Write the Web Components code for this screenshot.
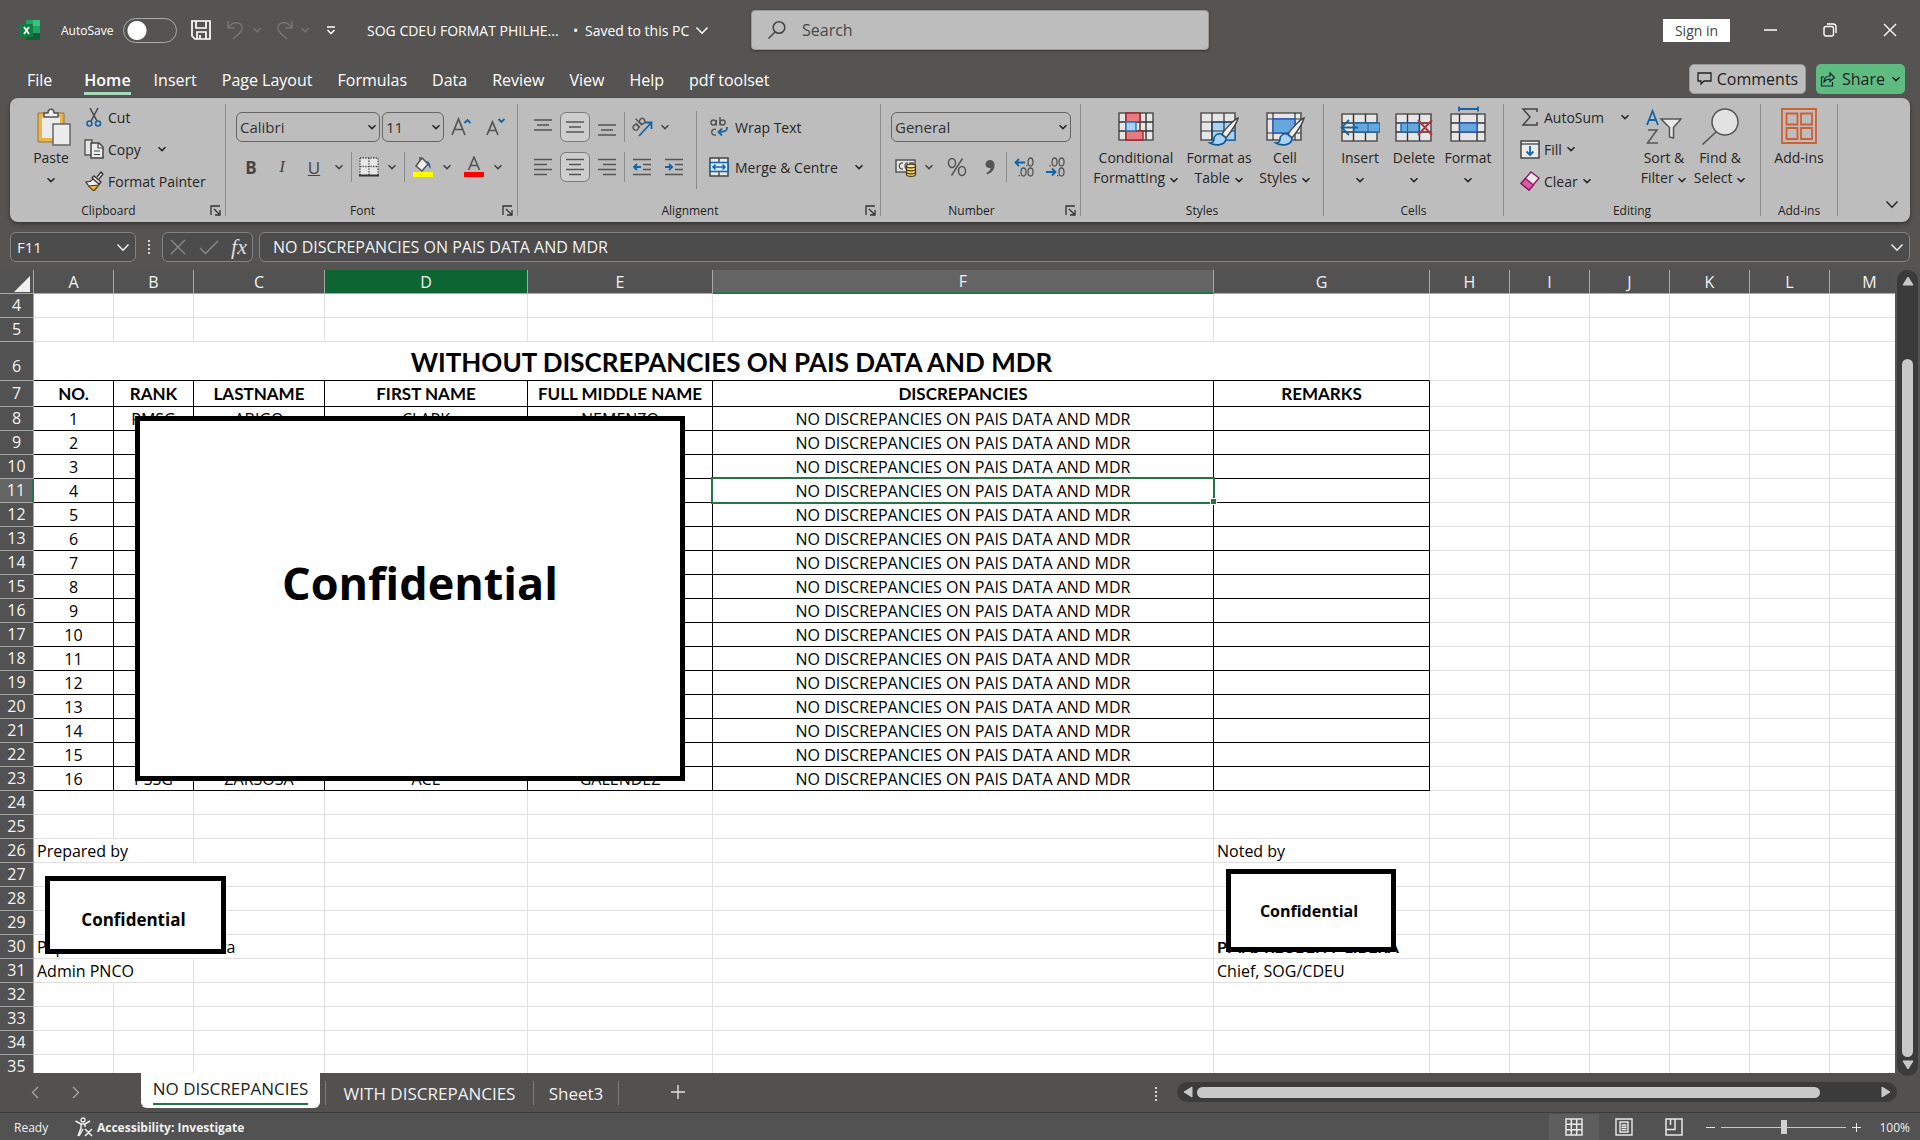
<!DOCTYPE html>
<html lang="en">
<head>
<meta charset="utf-8">
<title>SOG CDEU FORMAT PHILHE... - Excel</title>
<style>
html,body{margin:0;height:100%}
body{font-family:"Open Sans","Noto Sans",sans-serif;font-size:14px;color:#262626;overflow:hidden}
</style>
</head>
<body>
<excel-app></excel-app>
<script>
const define=(name,html,setup)=>{
  const tpl=document.createElement('template');
  tpl.innerHTML='<style>*{box-sizing:border-box}button,select,input{font:inherit;color:inherit}button{background:none;border:0;padding:0;margin:0}</style>'+html;
  customElements.define(name,class extends HTMLElement{
    constructor(){super();this.attachShadow({mode:'open'}).appendChild(tpl.content.cloneNode(true));}
    connectedCallback(){if(setup&&!this.ready){this.ready=true;setup(this,this.shadowRoot);}}
  });
};

/* ---------- icons: [width, height, content] ---------- */
const grey='stroke="#555" fill="none" stroke-width="1.5"', blue='stroke="#1464a5" fill="none" stroke-width="1.8"';
const lines=(rows,y)=>rows.map((r,i)=>`<path d="M${r[0]} ${y+i*5}H${r[1]}"/>`).join('');
const grid='<path d="M2 8h35v27H2z" fill="#e6e6e6" stroke="#555" stroke-width="1.6"/><path d="M2 17h35M2 26h35M13.500 8v27M25.500 8v27" stroke="#333" stroke-width="1.400" fill="none"/>';
const brush='<path d="M39 12c-3 1-12 10-16 16l4 4c4-5 11-15 12-20z" fill="#f2f2f2" stroke="#444" stroke-width="1.4"/><path d="M22 28c-4-1-7 2-7 5s-2 4-4 4c5 3 16 3 16-5z" fill="#a9d3f5" stroke="#125a96" stroke-width="1.6"/>';
const ICONS={
  chev:[10,6,'<path d="M1.500 1.200 5 4.600 8.500 1.200" fill="none" stroke="currentColor" stroke-width="1.500"/>'],
  chevbig:[14,9,'<path d="M1.500 1.500 7 7.200 12.500 1.500" fill="none" stroke="currentColor" stroke-width="1.500"/>'],
  excel:[20,20,'<path d="M6 0h13a1 1 0 0 1 1 1v18a1 1 0 0 1-1 1H6z" fill="#21a366"/><path d="M13 0h6a1 1 0 0 1 1 1v5h-7z" fill="#33c481"/><path d="M6 6h7v8H6z" fill="#107c41"/><path d="M13 6h7v7h-7z" fill="#21a366"/><path d="M6 13h14v6a1 1 0 0 1-1 1H6z" fill="#185c37"/><rect y="4" width="13" height="13" rx="1" fill="#107c41"/><path d="m4 7 5 7M9 7l-5 7" stroke="#fff" stroke-width="1.800"/>'],
  save:[20,20,'<path d="M1 1h18v18H4l-3-3zM5 1v7h10V1M6 19v-7h9v7M9 15v4" fill="none" stroke="#fff" stroke-width="1.700"/>'],
  undo:[20,20,'<path d="M2 1v7h7M2 8c4-7 14-7 14 0 0 5-5 7-9 11" fill="none" stroke="currentColor" stroke-width="1.500"/>'],
  redo:[20,20,'<path d="M18 1v7h-7M18 8C14 1 4 1 4 8c0 5 5 7 9 11" fill="none" stroke="currentColor" stroke-width="1.500"/>'],
  qat:[10,9,'<path d="M1 1h8M1.500 4 5 7.500 8.500 4" fill="none" stroke="#fff" stroke-width="1.400"/>'],
  search:[20,20,'<circle cx="12" cy="7.500" r="5.800" fill="none" stroke="#444" stroke-width="1.500"/><path d="M8 12 1.500 18.500" stroke="#444" stroke-width="1.500"/>'],
  min:[14,14,'<path d="M0 7h13" stroke="#fff" stroke-width="1.500"/>'],
  restore:[14,14,'<rect x="1" y="3.500" width="9.500" height="9.500" rx="2" fill="none" stroke="#fff" stroke-width="1.400"/><path d="M4 1h6a3 3 0 0 1 3 3v6" fill="none" stroke="#fff" stroke-width="1.400"/>'],
  close:[14,14,'<path d="m1 1 12 12M13 1 1 13" stroke="#fff" stroke-width="1.400"/>'],
  comment:[16,14,'<path d="M1 1h13v8H7l-3 3V9H1z" fill="none" stroke="#222" stroke-width="1.300"/>'],
  share:[16,16,'<path d="M4 6H1.500v9h11v-4" fill="none" stroke="#123" stroke-width="1.200"/><path d="M4 11c0-4 2-6 6-6V2l4.500 4.500L10 10.500V8C7 8 5.500 9 4 11z" fill="none" stroke="#123" stroke-width="1.200"/>'],
  paste:[40,40,'<path d="M7 7h26v29H7z" fill="#e9b54a" stroke="#9a762f"/><path d="M11 11h18v21H11z" fill="#ececec"/><path d="M13 11V7h4c0-5 6-5 6 0h4v4z" fill="#efefef" stroke="#555" stroke-width="1.500"/><path d="M22 18h17v21H22z" fill="#ececec" stroke="#666" stroke-width="1.500"/>'],
  cut:[20,20,'<path d="M6 1l7 13M14 1 7 14" stroke="#444" stroke-width="1.500"/><circle cx="5.500" cy="16.500" r="2.500" fill="none" stroke="#1464a5" stroke-width="1.600"/><circle cx="14" cy="16.500" r="2.500" fill="none" stroke="#1464a5" stroke-width="1.600"/>'],
  copy:[20,20,'<path d="M7 16H1V1h7v4" fill="#e6e6e6" stroke="#555" stroke-width="1.400"/><path d="M7 4h8l4 4v11H7z" fill="#ececec" stroke="#444" stroke-width="1.500"/><path d="M14 4v5h5M10 12h6M10 15.500h6" fill="none" stroke="#444" stroke-width="1.200"/>'],
  painter:[20,20,'<path d="M2 11c4 0 6-1 8-4l6 5c-1 3-4 5-6 8-3-2-6-5-8-9z" fill="#e9b54a" stroke="#5c4415" stroke-width="1.200"/><path d="m2 11c4 0 6-1 8-4l6 5-1 2-10 1z" fill="#ececec" stroke="#333"/><path d="m8 7 2-2 7 6-2 2zM13 6l4-5 2 2-4 5" fill="#ececec" stroke="#333" stroke-width="1.300"/>'],
  launch:[11,11,'<path d="M1 10V1h9" fill="none" stroke="#333" stroke-width="1.300"/><path d="m4 4 5.500 5.500M10 5v5H5" fill="none" stroke="#333" stroke-width="1.300"/>'],
  grow:[20,20,'<path d="m1 18 6.500-16L14 18M3.500 12.500h8" fill="none" stroke="#555" stroke-width="1.700"/><path d="m13.500 6 3-3 3 3" '+blue+'/>'],
  shrink:[20,20,'<path d="m2 18 5.500-13L13 18M4 13.500h7" fill="none" stroke="#555" stroke-width="1.700"/><path d="m13.500 2 3 3 3-3" '+blue+'/>'],
  borders:[20,20,'<path d="M1 1h18v17H1z" fill="#e8e8e8"/><path d="M1 1h18v17M1 1v17M10 1v17M1 9.500h18" fill="none" stroke="#444" stroke-width="1.300" stroke-dasharray="1.300 1.300"/><path d="M0 18.500h20" stroke="#333" stroke-width="2"/>'],
  fill:[22,22,'<path d="m10 2-6 8 6 5 6-7zM8 5V1" fill="#ececec" stroke="#555" stroke-width="1.500"/><path d="M14 5c3 0 5 3 4.500 8-2-2-2-4-2.500-5z" fill="#175f9c"/><path d="M1 16h20v5H1z" fill="#ff0"/>'],
  fontcol:[22,22,'<path d="m5.500 14 5.500-13 5.500 13M7.500 9.500h7" fill="none" stroke="#555" stroke-width="1.600"/><path d="M1 16h20v5H1z" fill="red"/>'],
  top:[18,18,`<g ${grey}>${lines([[0,18],[3,15],[0,18]],2)}</g>`],
  mid:[18,18,`<g ${grey}>${lines([[0,18],[3,15],[0,18]],4)}</g>`],
  bot:[18,18,`<g ${grey}>${lines([[0,18],[3,15],[0,18]],7)}</g>`],
  left:[18,18,`<g ${grey}>${lines([[0,18],[0,13],[0,18],[0,13]],1.5)}</g>`],
  centre:[18,18,`<g ${grey}>${lines([[0,18],[3,15],[0,18],[3,15]],1.5)}</g>`],
  right:[18,18,`<g ${grey}>${lines([[0,18],[5,18],[0,18],[5,18]],1.5)}</g>`],
  outdent:[18,18,`<g ${grey}>${lines([[0,18],[10,18],[10,18],[0,18]],1.5)}</g><path d="M8 9H1M4 6 1 9l3 3" ${blue}/>`],
  indent:[18,18,`<g ${grey}>${lines([[0,18],[10,18],[10,18],[0,18]],1.5)}</g><path d="M0 9h7M4 6l3 3-3 3" ${blue}/>`],
  orient:[22,22,'<g transform="rotate(-45 8 9)" fill="none" stroke="#555" stroke-width="1.400"><circle cx="4" cy="8.500" r="2.700"/><path d="M7 5.500v6"/><path d="M10 2v9.500"/><circle cx="13" cy="8.500" r="2.700"/></g><path d="M8 20 20 7M14 6.500h6.500V13" '+blue+'/>'],
  wrap:[20,20,'<g fill="none" stroke="#555" stroke-width="1.400"><circle cx="4.500" cy="5.500" r="2.500"/><path d="M7.300 3v5.500M11 0v8.500"/><circle cx="13.600" cy="5.500" r="2.500"/><path d="M7 12.500c-5-2-6 6-1 5.500h1"/></g><path d="M18 10v1c0 3-2 4-8 4M13 11.500 9.500 15l3.500 3.500" '+blue+'/>'],
  merge:[20,20,'<path d="M1 1h18v18H1z" fill="#e8e8e8" stroke="#444" stroke-width="1.500"/><path d="M10 1v18" stroke="#444" stroke-width="1.400"/><path d="M1 5.500h18v9H1z" fill="#d7e9f8" stroke="#1464a5" stroke-width="1.600"/><path d="M4 10h12M6.500 7.500 4 10l2.500 2.500M13.500 7.500 16 10l-2.500 2.500" fill="none" stroke="#1464a5" stroke-width="1.500"/>'],
  acct:[22,20,'<path d="M1 3h19v12H1z" fill="#e6e6e6" stroke="#555" stroke-width="1.500"/><path d="M8 6c-5-1-5 7 0 6M13 6c-4-1-4 7 0 6M15 9V6h3v3" fill="none" stroke="#555" stroke-width="1.300"/><path d="M11.500 9v8.500c0 2.500 9 2.500 9 0V9z" fill="#f3d27a" stroke="#4d3a10" stroke-width="1.200"/><ellipse cx="16" cy="9" rx="4.500" ry="1.800" fill="#fbe7ae" stroke="#4d3a10" stroke-width="1.200"/><path d="M11.500 12c0 2.400 9 2.400 9 0M11.500 15c0 2.400 9 2.400 9 0" fill="none" stroke="#4d3a10" stroke-width="1.200"/>'],
  percent:[20,20,'<g fill="none" stroke="#555" stroke-width="1.500"><ellipse cx="5" cy="6" rx="3.500" ry="4.500"/><ellipse cx="15" cy="14" rx="3.500" ry="4.500"/><path d="M15.500 1.500 4.500 18.500"/></g>'],
  comma:[10,18,'<path d="M5 2c3 0 4.500 2 4.500 5 0 5-3 8-7.500 9.500L1.500 15C4 13.500 5.500 12 5.500 10 3 10.500.500 9 .500 6.300.500 4 2.500 2 5 2z" fill="#555"/>'],
  incdec:[20,20,'<path d="M11 5.500H1.500M5 2 1.500 5.500 5 9" '+blue+'/><g fill="none" stroke="#555" stroke-width="1.300"><ellipse cx="16.500" cy="5" rx="2.500" ry="4"/><ellipse cx="9.500" cy="15" rx="2.500" ry="4"/><ellipse cx="16.500" cy="15" rx="2.500" ry="4"/></g><path d="M12 8h1.300v1.300H12zM4.500 18h1.300v1.300H4.500z" fill="#555"/>'],
  decdec:[20,20,'<path d="M1 15h9.500M7 11.500l3.500 3.500L7 18.500" '+blue+'/><g fill="none" stroke="#555" stroke-width="1.300"><ellipse cx="9.500" cy="5" rx="2.500" ry="4"/><ellipse cx="16.500" cy="5" rx="2.500" ry="4"/><ellipse cx="16.500" cy="15" rx="2.500" ry="4"/></g><path d="M4.500 8h1.300v1.300H4.500zM12 18h1.300v1.300H12z" fill="#555"/>'],
  condfmt:[38,40,'<path d="M2 7h34v27H2z" fill="#e6e6e6" stroke="#555" stroke-width="1.600"/><path d="M2 16h34M2 25h34M9 7v27M29 7v27M18 16v9M23 7v27" stroke="#333" stroke-width="1.400"/><path d="M9 7h14v9H9zM9 25h17v9H9z" fill="#e87b7f" stroke="#a3262c" stroke-width="1.400"/><path d="M9 16h10v9H9z" fill="#a9d3f5" stroke="#2e75b6" stroke-width="1.400"/>'],
  fmttable:[40,40,'<path d="M2 7h34v27H2z" fill="#e6e6e6" stroke="#555" stroke-width="1.600"/><path d="M13 16h23v18H13z" fill="#a9d3f5" stroke="#1d69ad" stroke-width="1.600"/><path d="M2 16h34M2 25h34M13 7v27M25 7v27" stroke="#333" stroke-width="1.200"/>'+brush],
  cellstyle:[40,40,'<path d="M2 7h34v27H2z" fill="#e6e6e6" stroke="#555" stroke-width="1.600"/><path d="M2 13h34M2 27h34M8 7v27M30 7v27" stroke="#333" stroke-width="1.200"/><path d="M8 13h22v14H8z" fill="#66a8dc" stroke="#2b57c4" stroke-width="1.400"/>'+brush],
  insert:[40,40,grid+'<path d="M14 17h26v9H14z" fill="#66a8dc" stroke="#1d69ad" stroke-width="1.400"/><path d="M28 17v9" stroke="#1d69ad"/><path d="M18 21.500H1.500M9 14l-7.500 7.500L9 29" '+blue+'/>'],
  del:[40,40,grid+'<path d="M7 17h18v9H7z" fill="#66a8dc" stroke="#1d69ad" stroke-width="1.400"/><path d="M13.500 17v9" stroke="#1d69ad"/><path d="m24 14 14 15M38 14 24 29" stroke="#b5373c" stroke-width="2" fill="none"/>'],
  format:[38,40,'<path d="M10 3h19M10 .500v5M29 .500v5" '+blue+'/><path d="M2 8h34v27H2z" fill="#e6e6e6" stroke="#555" stroke-width="1.600"/><path d="M2 17h34M2 26h34M10.500 8v27M28 8v27" stroke="#333" stroke-width="1.400"/><path d="M10.500 17H28v9H10.500z" fill="#66a8dc" stroke="#2b57c4" stroke-width="1.400"/>'],
  sigma:[20,20,'<path d="M17 5V2H3l7 8-7 8h14v-3" fill="none" stroke="#444" stroke-width="1.500"/>'],
  filldown:[20,20,'<path d="M1 2h18v17H1z" fill="#ececec" stroke="#444" stroke-width="1.500"/><path d="M1 5h18" stroke="#444" stroke-width="1.300"/><path d="M10 7v9M6.500 12.500 10 16l3.500-3.500" '+blue+'/>'],
  clear:[20,20,'<path d="M11 1 19 7 9 19 1 12.500z" fill="#f2e8ef" stroke="#8a1c63" stroke-width="1.400"/><path d="M5.500 7.500 13.500 14 9 19 1 12.500z" fill="#dd5aa8" stroke="#8a1c63" stroke-width="1.400"/>'],
  sort:[36,40,'<path d="m1 19 5.500-14L12 19M3 14h7" '+blue+'/><path d="M2 24h9L1.500 37H12" '+grey+'/><path d="M15 13h20l-7.500 8.500V32l-4 -1v-9.500z" fill="#e8e8e8" stroke="#555" stroke-width="1.500"/>'],
  find:[38,40,'<circle cx="24" cy="16" r="13" fill="#e2e2e2" stroke="#555" stroke-width="1.500"/><path d="M15 26 1.500 38.500" stroke="#555" stroke-width="1.700"/>'],
  addins:[38,40,'<g fill="none" stroke="#cf5f35" stroke-width="1.800"><path d="M2 3h34v34H2zM6.500 7.500h11v11h-11zM21 7.500h11v11H21zM6.500 22h11v11h-11zM21 22h11v11H21z"/></g>'],
  x:[16,16,'<path d="m1 1 14 14M15 1 1 15" stroke="#8c8c8c" stroke-width="1.300"/>'],
  tick:[20,16,'<path d="m1 9 5.500 5.500L19 2" fill="none" stroke="#8c8c8c" stroke-width="1.300"/>'],
  dots:[4,14,'<path d="M1 0h2v2H1zM1 4h2v2H1zM1 8h2v2H1zM1 12h2v2H1z" fill="#d4d4d4"/>'],
  prev:[8,13,'<path d="M7 1 1.500 6.500 7 12" fill="none" stroke="#a5a5a5" stroke-width="1.300"/>'],
  next:[8,13,'<path d="m1 1 5.500 5.500L1 12" fill="none" stroke="#a5a5a5" stroke-width="1.300"/>'],
  plus:[14,14,'<path d="M7 0v14M0 7h14" stroke="#e0e0e0" stroke-width="1.400"/>'],
  plussm:[9,9,'<path d="M4.500 0v9M0 4.500h9" stroke="#e8e8e8"/>'],
  minussm:[9,9,'<path d="M0 4.500h9" stroke="#e8e8e8"/>'],
  up:[12,10,'<path d="M6 1 11 9H1z" fill="#c8c8c8" stroke="#c8c8c8" stroke-linejoin="round"/>'],
  down:[12,10,'<path d="M6 9 1 1h10z" fill="#c8c8c8" stroke="#c8c8c8" stroke-linejoin="round"/>'],
  lt:[10,12,'<path d="M1 6 9 1v10z" fill="#c8c8c8" stroke="#c8c8c8" stroke-linejoin="round"/>'],
  rt:[10,12,'<path d="M9 6 1 11V1z" fill="#c8c8c8" stroke="#c8c8c8" stroke-linejoin="round"/>'],
  corner:[16,16,'<path d="M16 0v16H0z" fill="#f0f0f0"/>'],
  access:[20,20,'<circle cx="9" cy="3" r="2" fill="none" stroke="#eee" stroke-width="1.300"/><path d="M1.500 4 7 7v4l-3 8M16 4l-5 3v3M7 7h4M9 12l-4 7M11 12l7 7M18 12l-7 7" fill="none" stroke="#eee" stroke-width="1.500"/>'],
  vnormal:[18,18,'<path d="M1 1h16v16H1zM6.300 1v16M11.700 1v16M1 6.300h16M1 11.700h16" fill="none" stroke="#e8e8e8" stroke-width="1.500"/>'],
  vpage:[18,18,'<path d="M1 1h16v16H1zM5 4h8v10H5zM6.500 7h5M6.500 9.200h5M6.500 11.500h5" fill="none" stroke="#e8e8e8" stroke-width="1.400"/>'],
  vbreak:[18,18,'<path d="M1 1h16v16H1zM1 11.500h9V1M5.500 1v6" fill="none" stroke="#e8e8e8" stroke-width="1.500"/>']
};
define('x-icon','<style>:host{display:inline-flex;flex:none}svg{display:block}</style><span id="s" style="display:flex"></span>',(el,root)=>{
  const [w,h,c]=ICONS[el.getAttribute('name')];
  root.getElementById('s').innerHTML=`<svg width="${w}" height="${h}" viewBox="0 0 ${w} ${h}" aria-hidden="true">${c}</svg>`;
});

/* ---------- ribbon parts ---------- */
define('rb-group',`<style>
:host{display:flex;flex-direction:column;height:112px;flex:none;border-right:1px solid #8a8a8a;position:relative}
.body{height:98px;flex:none;display:flex}
.label{line-height:16px;padding-top:1px;font-size:12px;text-align:center;color:#222}
.launch{position:absolute;right:4px;bottom:0;display:none}
:host([launch]) .launch{display:flex}
:host([launch]) .label{padding-right:18px}
</style><div class="body"><slot></slot></div><div class="label" id="l"></div><button class="launch" aria-label="More options"><x-icon name="launch"></x-icon></button>`,
(el,r)=>{r.getElementById('l').textContent=el.getAttribute('label');});

define('rb-big',`<style>
:host{display:block;flex:none}
button{width:100%;display:flex;flex-direction:column;align-items:center;padding-top:2px}
#i{display:flex;margin-bottom:2px}
.t{line-height:20px;text-align:center;white-space:nowrap}
</style><button><span id="i"></span><span class="t"><slot></slot></span></button>`,
(el,r)=>{r.getElementById('i').innerHTML=`<x-icon name="${el.getAttribute('icon')}"></x-icon>`;});

define('rb-small',`<style>
:host{display:block}
button{height:26px;display:flex;align-items:center;gap:4px;white-space:nowrap}
:host([tall]) button{height:30px;gap:6px}
</style><button><span id="i" style="display:flex"></span><slot></slot></button>`,
(el,r)=>{r.getElementById('i').innerHTML=`<x-icon name="${el.getAttribute('icon')}"></x-icon>`;});

define('rb-tool',`<style>
:host{display:block;flex:none;width:30px}
button{width:100%;height:30px;display:flex;align-items:center;justify-content:center;font-size:17px;color:#444}
:host([on]) button{background:#cdcdcd;border:1px solid #7b7b7b;border-radius:6px}
</style><button><slot></slot></button>`,
(el,r)=>{r.querySelector('button').setAttribute('aria-label',el.getAttribute('label')||'Tool');});

define('rb-select',`<style>
:host{display:grid;flex:none;height:30px}
select{grid-area:1/1;appearance:none;width:100%;height:30px;background:transparent;border:1px solid #666;border-radius:6px;padding:0 3px;font-size:15px;color:#333}
x-icon{grid-area:1/1;justify-self:end;align-self:center;margin-right:3px;pointer-events:none}
</style><select><option></option></select><x-icon name="chev"></x-icon>`,
(el,r)=>{r.querySelector('option').textContent=el.getAttribute('value');r.querySelector('select').setAttribute('aria-label',el.getAttribute('label'));});

define('excel-ribbon',`<style>
:host{display:flex;margin:0 10px;height:124px;padding-top:6px;background:#bdbdbd;border-radius:8px;box-shadow:0 2px 4px #0006;flex:none}
.rows{display:flex;flex-direction:column;padding-top:8px;gap:10px}
.row{display:flex;height:30px;align-items:center}
.small{display:flex;flex-direction:column;gap:6px}
.sep{width:1px;height:30px;background:#8a8a8a;margin:0 3px;flex:none}
.vsep{width:1px;height:78px;margin-top:7px;background:#8a8a8a}
.g2{gap:2px}
.end{flex:1;display:flex;justify-content:flex-end;align-items:flex-end;padding:0 11px 13px}
.end button{display:flex}
b,i,u{font-size:17px}
</style>
<rb-group label="Clipboard" launch style="width:216px">
 <rb-big icon="paste" style="width:60px;margin-left:11px">Paste<br><x-icon name="chev"></x-icon></rb-big>
 <div class="small" style="padding-left:3px">
  <rb-small icon="cut">Cut</rb-small>
  <rb-small icon="copy">Copy<x-icon name="chev" style="margin-left:12px"></x-icon></rb-small>
  <rb-small icon="painter">Format Painter</rb-small>
 </div>
</rb-group>
<rb-group label="Font" launch style="width:292px">
 <div class="rows" style="padding-left:10px">
  <div class="row g2"><rb-select label="Font" value="Calibri" style="width:144px"></rb-select><rb-select label="Font size" value="11" style="width:62px"></rb-select>
   <rb-tool label="Increase font size"><x-icon name="grow"></x-icon></rb-tool><rb-tool label="Decrease font size" style="width:34px"><x-icon name="shrink"></x-icon></rb-tool></div>
  <div class="row"><rb-tool label="Bold"><b>B</b></rb-tool><rb-tool label="Italic" style="width:32px"><i style="font-family:'Liberation Serif',serif">I</i></rb-tool><rb-tool label="Underline" style="width:32px"><u>U</u></rb-tool>
   <rb-tool style="width:18px" label="Underline styles"><x-icon name="chev"></x-icon></rb-tool><span class="sep"></span>
   <rb-tool style="width:28px" label="Borders"><x-icon name="borders"></x-icon></rb-tool><rb-tool style="width:18px" label="Border styles"><x-icon name="chev"></x-icon></rb-tool><span class="sep"></span>
   <rb-tool style="width:30px" label="Fill colour"><x-icon name="fill"></x-icon></rb-tool><rb-tool style="width:18px" label="Fill colours"><x-icon name="chev"></x-icon></rb-tool>
   <rb-tool style="width:36px" label="Font colour"><x-icon name="fontcol"></x-icon></rb-tool><rb-tool style="width:12px" label="Font colours"><x-icon name="chev"></x-icon></rb-tool></div>
 </div>
</rb-group>
<rb-group label="Alignment" launch style="width:363px">
 <div class="rows" style="padding-left:10px">
  <div class="row g2"><rb-tool label="Top align"><x-icon name="top"></x-icon></rb-tool><rb-tool on label="Middle align"><x-icon name="mid"></x-icon></rb-tool><rb-tool label="Bottom align"><x-icon name="bot"></x-icon></rb-tool><span class="sep" style="margin:0"></span>
   <rb-tool label="Orientation"><x-icon name="orient"></x-icon></rb-tool><rb-tool style="width:12px" label="Orientations"><x-icon name="chev"></x-icon></rb-tool></div>
  <div class="row g2"><rb-tool label="Align left"><x-icon name="left"></x-icon></rb-tool><rb-tool on label="Centre"><x-icon name="centre"></x-icon></rb-tool><rb-tool label="Align right"><x-icon name="right"></x-icon></rb-tool><span class="sep" style="margin:0"></span>
   <rb-tool label="Decrease indent"><x-icon name="outdent"></x-icon></rb-tool><rb-tool label="Increase indent"><x-icon name="indent"></x-icon></rb-tool></div>
 </div>
 <div class="vsep" style="margin-left:7px"></div>
 <div class="rows" style="padding-left:12px">
  <rb-small tall icon="wrap">Wrap Text</rb-small>
  <rb-small tall icon="merge">Merge &amp; Centre<x-icon name="chev" style="margin-left:10px"></x-icon></rb-small>
 </div>
</rb-group>
<rb-group label="Number" launch style="width:200px">
 <div class="rows" style="padding-left:10px">
  <rb-select label="Number format" value="General" style="width:180px"></rb-select>
  <div class="row"><rb-tool label="Accounting format"><x-icon name="acct"></x-icon></rb-tool><rb-tool style="width:16px" label="Accounting formats"><x-icon name="chev"></x-icon></rb-tool>
   <rb-tool style="width:40px" label="Percent"><x-icon name="percent"></x-icon></rb-tool><rb-tool style="width:26px" label="Comma"><x-icon name="comma"></x-icon></rb-tool><span class="sep"></span>
   <rb-tool style="width:28px" label="Increase decimal"><x-icon name="incdec"></x-icon></rb-tool><rb-tool style="width:34px" label="Decrease decimal"><x-icon name="decdec"></x-icon></rb-tool></div>
 </div>
</rb-group>
<rb-group label="Styles" style="width:243px">
 <rb-big icon="condfmt" style="width:90px;margin-left:10px">Conditional<br>Formatting <x-icon name="chev"></x-icon></rb-big>
 <rb-big icon="fmttable" style="width:76px">Format as<br>Table <x-icon name="chev"></x-icon></rb-big>
 <rb-big icon="cellstyle" style="width:56px">Cell<br>Styles <x-icon name="chev"></x-icon></rb-big>
</rb-group>
<rb-group label="Cells" style="width:180px">
 <rb-big icon="insert" style="width:52px;margin-left:10px">Insert<br><x-icon name="chev"></x-icon></rb-big>
 <rb-big icon="del" style="width:56px">Delete<br><x-icon name="chev"></x-icon></rb-big>
 <rb-big icon="format" style="width:52px">Format<br><x-icon name="chev"></x-icon></rb-big>
</rb-group>
<rb-group label="Editing" style="width:257px">
 <div class="small" style="width:132px;padding-left:16px">
  <rb-small icon="sigma">AutoSum<x-icon name="chev" style="margin-left:12px"></x-icon></rb-small>
  <rb-small icon="filldown">Fill<x-icon name="chev"></x-icon></rb-small>
  <rb-small icon="clear">Clear<x-icon name="chev"></x-icon></rb-small>
 </div>
 <rb-big icon="sort" style="width:56px">Sort &amp;<br>Filter <x-icon name="chev"></x-icon></rb-big>
 <rb-big icon="find" style="width:56px">Find &amp;<br>Select <x-icon name="chev"></x-icon></rb-big>
</rb-group>
<rb-group label="Add-ins" style="width:77px">
 <rb-big icon="addins" style="width:76px">Add-ins</rb-big>
</rb-group>
<div class="end"><button aria-label="Collapse ribbon"><x-icon name="chevbig"></x-icon></button></div>`);

/* ---------- title bar and tabs ---------- */
define('title-bar',`<style>
:host{display:flex;height:60px;align-items:center;color:#fff;padding-left:20px;position:relative;flex:none}
button{display:flex;align-items:center}
.auto{font-size:12px;margin-left:21px;width:62px}
.toggle{appearance:none;margin:0;width:54px;height:25px;border:1px solid #aaa;border-radius:13px;background:radial-gradient(circle at 13px 50%,#fff 9px,transparent 10px)}
.dim{color:#757373}
.search{position:absolute;left:751px;top:10px;width:458px;height:40px;display:flex;align-items:center;background:#bdbdbd;border:1px solid #999;border-radius:4px;box-shadow:0 1px 3px #0005;padding-left:15px}
.search input{flex:1;border:0;background:none;outline:0;padding:0;margin-left:15px;font-size:16px;color:#444}
.search input::placeholder{color:#484848;opacity:1}
.sign{background:#fff;color:#444;width:67px;height:23px;font-size:14px;justify-content:center}
.right{margin-left:auto;display:flex;align-items:center}
</style>
<x-icon name="excel"></x-icon><label class="auto" for="as">AutoSave</label><input id="as" class="toggle" type="checkbox">
<button aria-label="Save" style="margin-left:14px"><x-icon name="save"></x-icon></button>
<button aria-label="Undo" class="dim" style="margin-left:15px;gap:6px"><x-icon name="undo"></x-icon><x-icon name="chev"></x-icon></button>
<button aria-label="Redo" class="dim" style="margin-left:12px;gap:6px"><x-icon name="redo"></x-icon><x-icon name="chev"></x-icon></button>
<button aria-label="Customise toolbar" style="margin-left:16px"><x-icon name="qat"></x-icon></button>
<span style="margin-left:31px;width:206px;white-space:nowrap">SOG CDEU FORMAT PHILHE...</span><span style="width:12px">•</span>
<button style="gap:6px;white-space:nowrap">Saved to this PC<x-icon name="chevbig"></x-icon></button>
<label class="search"><x-icon name="search"></x-icon><input placeholder="Search" aria-label="Search"></label>
<div class="right"><button class="sign">Sign in</button>
<button aria-label="Minimise" style="margin-left:34px"><x-icon name="min"></x-icon></button>
<button aria-label="Restore" style="margin-left:45px"><x-icon name="restore"></x-icon></button>
<button aria-label="Close" style="margin:0 23px 0 46px"><x-icon name="close"></x-icon></button></div>`);

define('ribbon-tabs',`<style>
:host{display:flex;height:38px;color:#fff;padding:0 15px 0 27px;align-items:flex-start;flex:none}
nav{display:flex;gap:25px;font-size:16px;line-height:24px;padding-top:8px}
nav :first-child{margin-right:7px}
a{color:inherit;text-decoration:none;white-space:nowrap}
a.on{font-weight:600;border-bottom:3px solid #a4d9b9;margin-right:-2px}
.right{margin-left:auto;display:flex;gap:10px;padding-top:4px}
button{height:30px;border-radius:5px;font-size:16px;color:#222;display:flex;align-items:center;justify-content:center;gap:6px}
</style><nav><a href="#file">File</a><a href="#home" class="on">Home</a><a href="#insert">Insert</a><a href="#layout">Page Layout</a><a href="#formulas">Formulas</a><a href="#data">Data</a><a href="#review">Review</a><a href="#view">View</a><a href="#help">Help</a><a href="#pdf">pdf toolset</a></nav>
<div class="right"><button style="width:117px;background:#bdbdbd;border:1px solid #999;gap:4px"><x-icon name="comment"></x-icon>Comments</button>
<button style="width:89px;background:#5fbc80"><x-icon name="share"></x-icon>Share<x-icon name="chev"></x-icon></button></div>`);

/* ---------- formula bar ---------- */
define('formula-bar',`<style>
:host{display:flex;height:48px;padding:10px 10px 8px;color:#f2f2f2;flex:none}
.box{height:30px;border:1px solid #828282;border-radius:6px;background:#4c4c4c;display:flex;align-items:center}
input{border:0;background:none;outline:0;padding:0;min-width:0;flex:1}
</style>
<div class="box" style="width:126px;padding:0 5px 0 6px"><input value="F11" aria-label="Name box" style="font-size:15px"><x-icon name="chevbig"></x-icon></div>
<x-icon name="dots" style="margin:8px 11px 0"></x-icon>
<div class="box" style="width:91px;padding:0 5px 0 7px;justify-content:space-between;color:#ddd"><x-icon name="x"></x-icon><x-icon name="tick"></x-icon><button aria-label="Insert function" style="font:italic 22px 'Liberation Serif',serif">fx</button></div>
<div class="box" style="flex:1;margin-left:6px;padding:0 5px 0 13px"><input value="NO DISCREPANCIES ON PAIS DATA AND MDR" aria-label="Formula" style="font-size:16px"><x-icon name="chevbig"></x-icon></div>`);

/* ---------- sheet ---------- */
define('cover-box',`<style>:host{position:absolute;display:flex;align-items:center;justify-content:center;background:#fff;border:5px solid #000;box-sizing:border-box;color:#000;font-weight:700}</style><span><slot></slot></span>`);

define('sheet-grid',`<style>
:host{display:block;position:relative;flex:1;min-width:0;overflow:hidden;background:#fff;color:#000}
table{border-collapse:separate;border-spacing:0;table-layout:fixed;width:1909px;font-size:16px}
th,td{padding:0;height:24px;line-height:23px;border-right:1px solid #e0e0e0;border-bottom:1px solid #e0e0e0;white-space:nowrap;text-align:center;overflow:hidden;font-weight:400}
thead th,tbody th{background:#525252;color:#f2f2f2;border-color:#a8a8a8}
thead th{line-height:22px;padding-top:1px}
thead th.sel{background:#0e6534}
thead th.act{background:#646464;border-bottom:2px solid #257548;line-height:21px}
tbody th.act{background:#646464;border-right:2px solid #257548}
td{padding-top:1px;line-height:22px}
td.k{border-color:#000}
td.kb{border-bottom-color:#000}
td.h,td.title,td b{font-family:Lato,Carlito,sans-serif;font-weight:700}
td.h{font-size:17px}
td.title{font-size:26px;line-height:34px;padding-top:2px}
td.txt{text-align:left;padding-left:3px;overflow:visible}
td.nr{border-right-color:transparent}
td.cur{position:relative;overflow:visible}
.frame{position:absolute;inset:-2px;border:2px solid #257548}
.frame::after{content:"";position:absolute;right:-4px;bottom:-3px;width:5px;height:5px;background:#257548;border:1px solid #fff}
</style><table><colgroup id="c"></colgroup><thead><tr id="h"></tr></thead><tbody id="b"></tbody></table>
<cover-box style="left:135px;top:146px;width:550px;height:365px;font-size:45px;padding:0 0 32px 20px">Confidential</cover-box>
<cover-box style="left:45px;top:606px;width:181px;height:78px;font-size:17px;padding:8px 4px 0 0">Confidential</cover-box>
<cover-box style="left:1226px;top:599px;width:170px;height:83px;font-size:16px;padding:0 4px 0 0">Confidential</cover-box>`,
(el,r)=>{
  const $=i=>r.getElementById(i), cols='ABCDEFGHIJKLM'.split('');
  $('c').innerHTML=[34,80,80,131,203,185,501,216,80,80,80,80,80,80].map(w=>`<col style="width:${w}px">`).join('');
  $('h').innerHTML='<th style="text-align:right;padding:5px 3px 0 0;line-height:0"><x-icon name="corner"></x-icon></th>'+cols.map(c=>`<th scope="col" class="${c=='D'?'sel':c=='F'?'act':''}">${c}</th>`).join('');
  const first=['PMSG','ABIGO','CLARK','NEMENZO'], last=['PSSG','ZARSOSA','ACE','GALENDEZ'];
  let out='';
  for(let n=4;n<=35;n++){
    const hgt=n==6?39:n==7?26:24;
    out+=`<tr><th scope="row" class="${n==11?'act':''}" style="height:${hgt}px${n==6?';padding-top:10px':''}">${n}</th>`;
    let i=0;
    if(n==6){out+='<td colspan="7" class="title kb">WITHOUT DISCREPANCIES ON PAIS DATA AND MDR</td>';i=7;}
    for(;i<13;i++){
      let cls='',t='';
      if(n>=7&&n<=23&&i<7){
        cls='k';
        if(n==7){cls+=' h';t=['NO.','RANK','LASTNAME','FIRST NAME','FULL MIDDLE NAME','DISCREPANCIES','REMARKS'][i];}
        else if(i==0)t=n-7;
        else if(i==5)t='NO DISCREPANCIES ON PAIS DATA AND MDR';
        else if(i<5&&n==8)t=first[i-1];
        else if(i<5&&n==23)t=last[i-1];
        else if(i==1&&(n==10||n==11||n==18))t='PSSG';
        if(n==11&&i==5){cls+=' cur';t+='<span class="frame"></span>';}
      }
      const put=(r,c,s)=>{if(n==r&&i==c){cls='txt'+(c==0?' nr':'');t=s;}};
      put(26,0,'Prepared by');put(30,0,'Pepe Rommel D. Alcantara');put(31,0,'Admin PNCO');
      put(26,6,'Noted by');put(30,6,'<b>PMAJ REUBEN P LIBERA</b>');put(31,6,'Chief, SOG/CDEU');
      if((n==30&&i==1)||(n>=27&&n<=29&&i<2))cls='nr';
      out+=`<td class="${cls}">${t}</td>`;
    }
    out+='</tr>';
  }
  $('b').innerHTML=out;
});

define('scroll-v',`<style>:host{display:flex;flex-direction:column;align-items:center;width:21px;margin:0 2px -3px 2px;background:#3b3b3b;border-radius:10px;padding:6px 0;gap:3px;flex:none;z-index:1}
.track{flex:1;display:flex;flex-direction:column;padding-top:70px}.thumb{flex:1;width:11px;border-radius:6px;background:#c8c8c8}button{display:flex}</style>
<button aria-label="Scroll up"><x-icon name="up"></x-icon></button><div class="track"><div class="thumb"></div></div><button aria-label="Scroll down"><x-icon name="down"></x-icon></button>`);

define('sheet-tabs',`<style>
:host{display:flex;height:40px;background:#525150;color:#f0f0f0;font-size:17px;border-bottom:1px solid #3c3c3c;padding:0 23px 0 31px;flex:none;position:relative}
.nav{display:flex;align-items:center;gap:33px;width:110px}
button{white-space:nowrap}
.on{background:#fff;color:#222;height:35px;width:179px;border-radius:0 0 6px 6px;display:flex;justify-content:center;font-weight:400}
.on span{border-bottom:2px solid #257548;height:32px;line-height:32px}
.tab{border-right:1px solid #7d7d7d;height:24px;margin-top:8px;display:flex;align-items:center;justify-content:center}
.h{margin:9px 0 10px 19px;flex:0 1 720px;background:#3b3b3b;border-radius:10px;display:flex;align-items:center;padding:0 6px;gap:4px}
.h div{flex:1;padding-right:57px}.h i{display:block;height:11px;border-radius:6px;background:#c8c8c8}
.h button{display:flex}
</style>
<div class="nav"><button aria-label="Previous"><x-icon name="prev"></x-icon></button><button aria-label="Next"><x-icon name="next"></x-icon></button></div>
<button class="on"><span>NO DISCREPANCIES</span></button><div class="tab" style="width:6px"></div>
<button class="tab" style="width:208px">WITH DISCREPANCIES</button><button class="tab" style="width:85px">Sheet3</button>
<button aria-label="New sheet" style="margin-left:52px"><x-icon name="plus"></x-icon></button>
<x-icon name="dots" style="margin:14px 0 0 auto"></x-icon>
<div class="h"><button aria-label="Scroll left"><x-icon name="lt"></x-icon></button><div><i></i></div><button aria-label="Scroll right"><x-icon name="rt"></x-icon></button></div>`);

define('status-bar',`<style>
:host{display:flex;height:27px;background:#525252;color:#f0f0f0;font-size:12px;align-items:center;padding:1px 10px 0 14px;flex:none}
.v{width:50px;height:26px;display:flex;align-items:center;justify-content:center}
.z{appearance:none;margin:0 6px;width:125px;height:14px;background:linear-gradient(#c8c8c8,#c8c8c8) center/100% 1px no-repeat}
.z::-webkit-slider-thumb{appearance:none;width:6px;height:14px;background:#d0d0d0}
</style>
<span style="width:60px">Ready</span><button style="display:flex;align-items:center;gap:3px;font-weight:700"><x-icon name="access"></x-icon>Accessibility: Investigate</button>
<button class="v" aria-label="Normal view" style="margin-left:auto;background:#5e5e5e"><x-icon name="vnormal"></x-icon></button><button class="v" aria-label="Page layout view"><x-icon name="vpage"></x-icon></button><button class="v" aria-label="Page break view"><x-icon name="vbreak"></x-icon></button>
<button aria-label="Zoom out" style="margin-left:7px"><x-icon name="minussm"></x-icon></button><input class="z" type="range" aria-label="Zoom" min="0" max="100" value="50"><button aria-label="Zoom in"><x-icon name="plussm"></x-icon></button>
<span style="width:49px;text-align:right">100%</span>`);

define('excel-app',`<style>
:host{display:flex;flex-direction:column;height:100vh;background:#565453;overflow:hidden}
.mid{flex:1;display:flex;min-height:0}
</style><title-bar></title-bar><ribbon-tabs></ribbon-tabs><excel-ribbon></excel-ribbon><formula-bar></formula-bar>
<div class="mid"><sheet-grid></sheet-grid><scroll-v></scroll-v></div><sheet-tabs></sheet-tabs><status-bar></status-bar>`);
</script>
</body>
</html>
